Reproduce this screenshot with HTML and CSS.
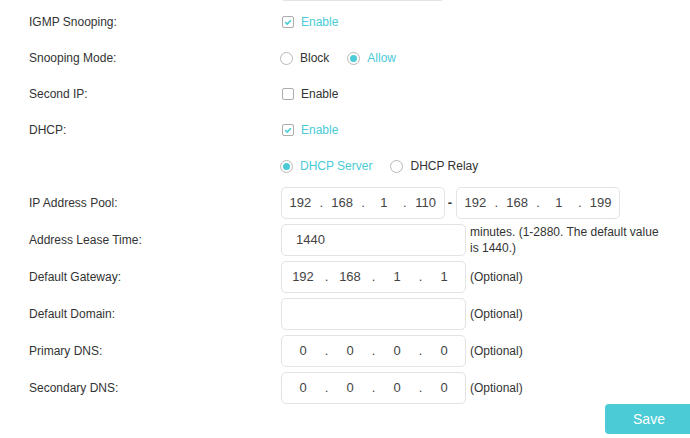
FILE: index.html
```html
<!DOCTYPE html>
<html lang="en">

<head>
    <meta charset="UTF-8">
    <title>LAN Settings</title>
    <link rel="stylesheet" href="styles.css">
</head>

<body>
    <div class="page">
        <div class="form">
            <!-- bottom edge of the field above, scrolled out of view -->
            <div class="prev-field"></div>

            <div class="row">
                <div class="label">IGMP Snooping:</div>
                <div class="control">
                    <label class="check checked">
                        <span class="box">
                            <svg width="10" height="10" viewBox="0 0 10 10"><path d="M2.2 5.2 L4.2 7.1 L7.9 3.2" fill="none" stroke="#4acbd6" stroke-width="1.6"/></svg>
                        </span>
                        <span class="text">Enable</span>
                    </label>
                </div>
            </div>

            <div class="row">
                <div class="label">Snooping Mode:</div>
                <div class="control">
                    <label class="radio">
                        <span class="dot"></span>
                        <span class="text">Block</span>
                    </label>
                    <label class="radio checked">
                        <span class="dot"></span>
                        <span class="text">Allow</span>
                    </label>
                </div>
            </div>

            <div class="row">
                <div class="label">Second IP:</div>
                <div class="control">
                    <label class="check">
                        <span class="box"></span>
                        <span class="text">Enable</span>
                    </label>
                </div>
            </div>

            <div class="row">
                <div class="label">DHCP:</div>
                <div class="control">
                    <label class="check checked">
                        <span class="box">
                            <svg width="10" height="10" viewBox="0 0 10 10"><path d="M2.2 5.2 L4.2 7.1 L7.9 3.2" fill="none" stroke="#4acbd6" stroke-width="1.6"/></svg>
                        </span>
                        <span class="text">Enable</span>
                    </label>
                </div>
            </div>

            <div class="row">
                <div class="label"></div>
                <div class="control">
                    <label class="radio checked">
                        <span class="dot"></span>
                        <span class="text">DHCP Server</span>
                    </label>
                    <label class="radio">
                        <span class="dot"></span>
                        <span class="text">DHCP Relay</span>
                    </label>
                </div>
            </div>

            <div class="row row-field">
                <div class="label">IP Address Pool:</div>
                <div class="control">
                    <div class="field ip short">
                        <span class="seg">192</span><span class="sep">.</span>
                        <span class="seg">168</span><span class="sep">.</span>
                        <span class="seg">1</span><span class="sep">.</span>
                        <span class="seg">110</span>
                    </div>
                    <span class="dash">-</span>
                    <div class="field ip short">
                        <span class="seg">192</span><span class="sep">.</span>
                        <span class="seg">168</span><span class="sep">.</span>
                        <span class="seg">1</span><span class="sep">.</span>
                        <span class="seg">199</span>
                    </div>
                </div>
            </div>

            <div class="row row-field">
                <div class="label">Address Lease Time:</div>
                <div class="control">
                    <div class="field plain">1440</div>
                    <span class="hint hint-wrap">minutes. (1-2880. The default value is 1440.)</span>
                </div>
            </div>

            <div class="row row-field">
                <div class="label">Default Gateway:</div>
                <div class="control">
                    <div class="field ip">
                        <span class="seg">192</span><span class="sep">.</span>
                        <span class="seg">168</span><span class="sep">.</span>
                        <span class="seg">1</span><span class="sep">.</span>
                        <span class="seg">1</span>
                    </div>
                    <span class="hint">(Optional)</span>
                </div>
            </div>

            <div class="row row-field">
                <div class="label">Default Domain:</div>
                <div class="control">
                    <div class="field plain"></div>
                    <span class="hint">(Optional)</span>
                </div>
            </div>

            <div class="row row-field">
                <div class="label">Primary DNS:</div>
                <div class="control">
                    <div class="field ip">
                        <span class="seg">0</span><span class="sep">.</span>
                        <span class="seg">0</span><span class="sep">.</span>
                        <span class="seg">0</span><span class="sep">.</span>
                        <span class="seg">0</span>
                    </div>
                    <span class="hint">(Optional)</span>
                </div>
            </div>

            <div class="row row-field">
                <div class="label">Secondary DNS:</div>
                <div class="control">
                    <div class="field ip">
                        <span class="seg">0</span><span class="sep">.</span>
                        <span class="seg">0</span><span class="sep">.</span>
                        <span class="seg">0</span><span class="sep">.</span>
                        <span class="seg">0</span>
                    </div>
                    <span class="hint">(Optional)</span>
                </div>
            </div>
        </div>

        <div class="footer">
            <button class="btn-save">Save</button>
        </div>
    </div>
</body>

</html>
```

FILE: styles.css
```css
* {
    margin: 0;
    padding: 0;
    box-sizing: border-box;
}

html,
body {
    overflow: hidden;
}

body {
    font-family: 'Liberation Sans', Arial, sans-serif;
    font-size: 12px;
    color: #333;
    background: #fff;
}

.page {
    width: 693px;
}

.form {
    padding-left: 29px;
}

.prev-field {
    width: 159px;
    height: 1px;
    margin-left: 254px;
    margin-bottom: 3px;
    background: #e4e4e4;
}

.row {
    display: flex;
    align-items: center;
    height: 36px;
}

.row-field {
    height: 37px;
}

.label {
    width: 251px;
    flex-shrink: 0;
}

.control {
    display: flex;
    align-items: center;
}

/* checkbox */
.check,
.radio {
    display: flex;
    align-items: center;
    cursor: pointer;
}

.check .box {
    width: 12px;
    height: 12px;
    margin-left: 2px;
    margin-right: 7px;
    border: 1px solid #adadad;
    border-radius: 2px;
    display: flex;
    align-items: center;
    justify-content: center;
}

.check .box svg {
    display: block;
}

/* radio */
.radio {
    margin-right: 18px;
}

.radio .dot {
    width: 13px;
    height: 13px;
    margin-right: 7px;
    border: 1px solid #b8b8b8;
    border-radius: 50%;
    display: flex;
    align-items: center;
    justify-content: center;
}

.radio.checked .dot::after {
    content: '';
    width: 7px;
    height: 7px;
    border-radius: 50%;
    background: #4acbd6;
}

.checked .text {
    color: #4acbd6;
}

/* text fields */
.field {
    height: 32px;
    width: 185px;
    margin-left: 1px;
    border: 1px solid #e3e3e3;
    border-radius: 5px;
    font-size: 13px;
    color: #444;
    display: flex;
    align-items: center;
}

.field.short {
    width: 164px;
}

.field.plain {
    padding-left: 14px;
}

.ip {
    padding: 0 2px;
}

.ip .seg {
    flex: 1;
    text-align: center;
}

.ip .sep {
    width: 9px;
    text-align: center;
}

.dash {
    width: 10px;
    text-align: center;
    font-size: 13px;
    font-weight: bold;
}

.hint {
    margin-left: 4px;
    line-height: 16px;
}

.hint-wrap {
    width: 196px;
}

.footer {
    display: flex;
    justify-content: flex-end;
    margin-top: -2px;
}

.btn-save {
    width: 88px;
    height: 30px;
    border: none;
    border-radius: 4px;
    background: #4acbd6;
    color: #fff;
    font-family: 'Liberation Sans', Arial, sans-serif;
    font-size: 14px;
}
```
